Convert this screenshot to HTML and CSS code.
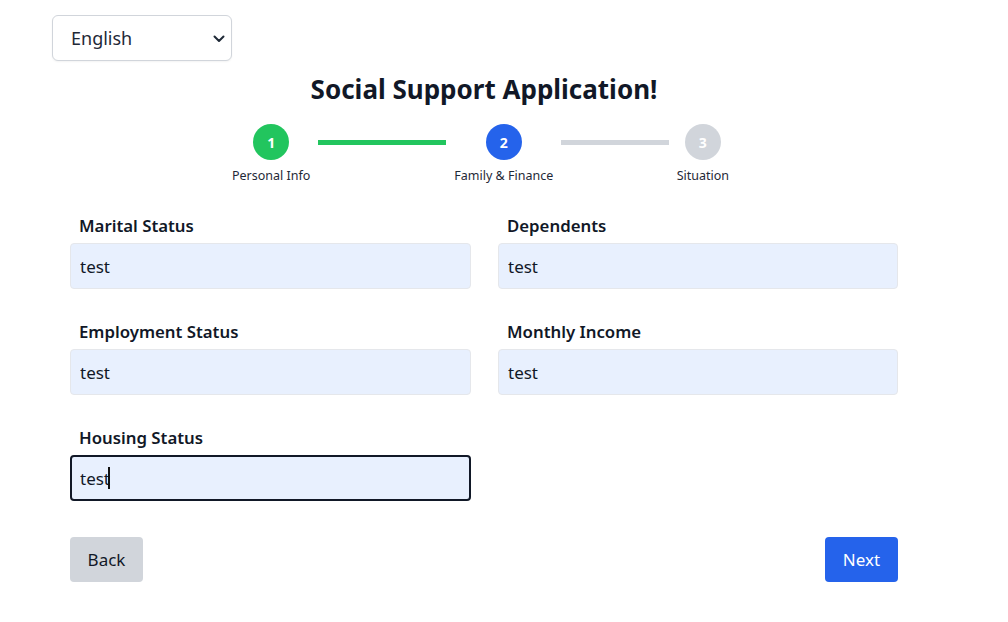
FILE: index.html
```html
<!DOCTYPE html>
<html lang="en">
<head>
<meta charset="utf-8">
<title>Social Support Application</title>
<link rel="stylesheet" href="styles.css">
</head>
<body>
<div class="topbar">
  <div class="select-wrap">
    <select class="lang">
      <option>English</option>
      <option>العربية</option>
    </select>
    <svg class="chev" width="12" height="8" viewBox="0 0 12 8"><path d="M1.5 1.5 L6 6 L10.5 1.5" fill="none" stroke="#1f2937" stroke-width="2" stroke-linecap="round" stroke-linejoin="round"/></svg>
  </div>
</div>
<main class="container">
  <h1 class="title">Social Support Application!</h1>
  <div class="stepper">
    <div class="step grow">
      <div class="step-col">
        <div class="circle done">1</div>
        <div class="step-label">Personal Info</div>
      </div>
      <div class="line done"></div>
    </div>
    <div class="step grow">
      <div class="step-col">
        <div class="circle active">2</div>
        <div class="step-label">Family &amp; Finance</div>
      </div>
      <div class="line"></div>
    </div>
    <div class="step">
      <div class="step-col">
        <div class="circle">3</div>
        <div class="step-label">Situation</div>
      </div>
    </div>
  </div>
  <form class="form-grid">
    <div class="field">
      <label class="label">Marital Status</label>
      <input class="input" type="text" value="test">
    </div>
    <div class="field">
      <label class="label">Dependents</label>
      <input class="input" type="text" value="test">
    </div>
    <div class="field">
      <label class="label">Employment Status</label>
      <input class="input" type="text" value="test">
    </div>
    <div class="field">
      <label class="label">Monthly Income</label>
      <input class="input" type="text" value="test">
    </div>
    <div class="field">
      <label class="label">Housing Status</label>
      <div class="input-wrap">
        <input class="input focused" type="text" value="test">
        <span class="caret"></span>
      </div>
    </div>
  </form>
  <div class="actions">
    <button class="btn back" type="button">Back</button>
    <button class="btn next" type="button">Next</button>
  </div>
</main>
</body>
</html>
```
FILE: styles.css
```css
* { box-sizing: border-box; }
html, body { margin: 0; padding: 0; background: #ffffff; }
body {
  font-family: "Noto Sans", "Open Sans", sans-serif;
  color: #111827;
}
.topbar {
  padding: 15px 0 0 52px;
}
.select-wrap {
  position: relative;
  width: 180px;
  height: 46px;
}
.lang {
  -webkit-appearance: none;
  appearance: none;
  width: 180px;
  height: 46px;
  border: 1px solid #d1d5db;
  border-radius: 6px;
  background: #ffffff;
  padding: 0 0 0 18px;
  font-family: "Noto Sans", sans-serif;
  font-size: 18px;
  color: #1f2937;
  box-shadow: 0 1px 2px rgba(0,0,0,0.05);
}
.chev {
  position: absolute;
  right: 7px;
  top: 20px;
  pointer-events: none;
}
.container {
  width: 828px;
  margin-left: 70px;
}
.title {
  margin: 10px 0 0 0;
  font-size: 26px;
  line-height: 36px;
  font-weight: 700;
  text-align: center;
  color: #111827;
}
.stepper {
  display: flex;
  width: 497px;
  margin: 17px 0 0 162px;
}
.step {
  display: flex;
  align-items: flex-start;
}
.step.grow { flex: 1; }
.step-col {
  display: flex;
  flex-direction: column;
  align-items: center;
}
.circle {
  width: 36px;
  height: 36px;
  border-radius: 50%;
  background: #d1d5db;
  color: #ffffff;
  font-size: 14px;
  font-weight: 700;
  display: flex;
  align-items: center;
  justify-content: center;
}
.circle.done { background: #22c55e; }
.circle.active { background: #2563eb; }
.step-label {
  margin-top: 7px;
  font-size: 12.5px;
  line-height: 18px;
  color: #1f2937;
  white-space: nowrap;
}
.line {
  flex: 1;
  height: 5px;
  margin: 16px 8px 0 8px;
  background: #d1d5db;
}
.line.done { background: #22c55e; }
.form-grid {
  display: grid;
  grid-template-columns: 401px 400px;
  column-gap: 27px;
  row-gap: 31px;
  margin-top: 29px;
}
.field {
  display: flex;
  flex-direction: column;
}
.label {
  display: block;
  padding-left: 9px;
  margin-bottom: 5px;
  font-size: 16.8px;
  line-height: 24px;
  font-weight: 600;
  color: #111827;
}
.input-wrap { position: relative; }
.input {
  width: 100%;
  height: 46px;
  border: 1px solid #e5e7eb;
  border-radius: 4px;
  background: #e8f0fe;
  padding: 0 9px;
  font-family: "Noto Sans", sans-serif;
  font-size: 17px;
  color: #111827;
  outline: none;
}
.input.focused {
  border: 2px solid #111827;
  padding: 0 8px;
}
.caret {
  position: absolute;
  left: 38px;
  top: 12px;
  width: 2px;
  height: 22px;
  background: #111111;
}
.actions {
  display: flex;
  justify-content: space-between;
  margin-top: 36px;
}
.btn {
  height: 45px;
  width: 73px;
  border: none;
  border-radius: 4px;
  font-family: "Noto Sans", sans-serif;
  font-size: 17px;
}
.btn.back { background: #d1d5db; color: #111827; }
.btn.next { background: #2563eb; color: #ffffff; }
```
